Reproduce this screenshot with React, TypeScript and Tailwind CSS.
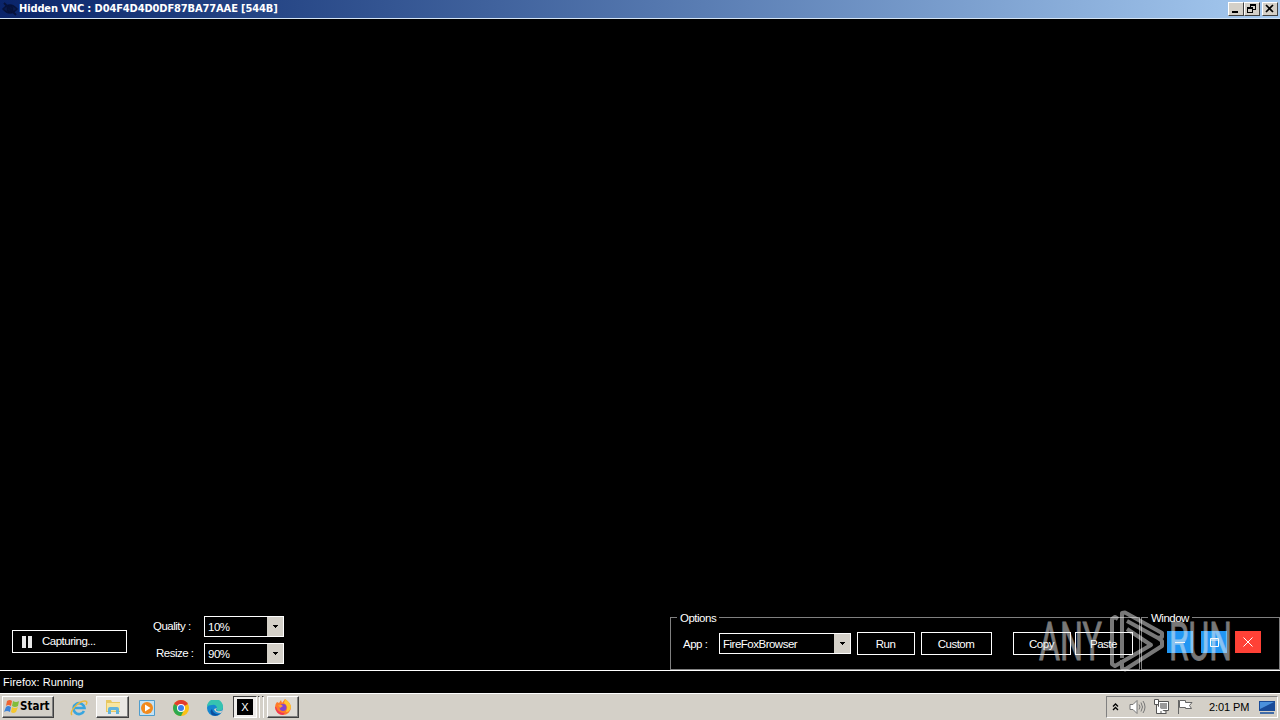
import type { ReactNode } from "react";

const UI_FONT = "font-['Liberation_Sans',sans-serif]";
const LABEL = "text-[11.5px] tracking-[-0.5px] whitespace-nowrap";

const IconEyeOff = () => (
  <svg width="16" height="14" viewBox="0 0 16 14" fill="none" stroke="#06123a">
    <path d="M1 7Q8 -1 15 7Q8 15 1 7Z" fill="#0a1b4c" strokeWidth="1.5" />
    <circle cx="8" cy="7" r="2.5" strokeWidth="1.5" />
    <path d="M2 1L14 13" strokeWidth="2" />
  </svg>
);

const CaptionButton = ({ children }: { children: ReactNode }) => (
  <div className="h-[14px] w-4 bg-[#d4d0c8] border border-t-white border-l-white border-r-[#404040] border-b-[#404040]">
    <svg width="14" height="12" viewBox="0 0 14 12" fill="none" stroke="#000" shapeRendering="crispEdges">
      {children}
    </svg>
  </div>
);

const TitleBar = () => (
  <div className="flex h-[19px] items-start border-b border-[#d4e4f4] bg-gradient-to-r from-[#0a246a] to-[#a6caf0] pl-[2px] pr-[2px]">
    <div className="mt-[2px] w-[17px]">
      <IconEyeOff />
    </div>
    <span className="mt-[2px] flex-1 whitespace-nowrap font-['DejaVu_Sans_Condensed','DejaVu_Sans',sans-serif] text-[11px] leading-[14px] font-bold font-stretch-condensed tracking-[-0.12px] text-white">
      Hidden VNC : D04F4D4D0DF87BA77AAE [544B]
    </span>
    <div className="mt-[2px] flex">
      <CaptionButton>
        <path d="M3 9H9" strokeWidth="2" />
      </CaptionButton>
      <CaptionButton>
        <path d="M5 2H11M5 1.5H11M5.5 1V4M10.5 1V7M8 6.5H11" />
        <path d="M2 5H8M2 4.5H8M2.5 4V10M7.5 4V10M2 9.5H8" />
      </CaptionButton>
      <div className="ml-[2px]">
        <CaptionButton>
          <path d="M3 2L10 9M10 2L3 9" strokeWidth="1.7" shapeRendering="auto" />
        </CaptionButton>
      </div>
    </div>
  </div>
);

interface ComboProps {
  value: string;
  className: string;
}

const Combo = ({ value, className }: ComboProps) => (
  <div className={`flex h-[21px] border border-white bg-black ${className}`}>
    <span className={`flex-1 pl-[3px] leading-[20px] ${LABEL}`}>{value}</span>
    <div className="flex w-4 items-center justify-center bg-[#d4d0c8]">
      <svg width="5" height="3" viewBox="0 0 5 3" shapeRendering="crispEdges">
        <path d="M0 0H5L2.5 3Z" />
      </svg>
    </div>
  </div>
);

const FlatButton = ({ label, className }: { label: string; className: string }) => (
  <div className={`h-[23px] border border-white pr-px text-center leading-[22px] ${LABEL} ${className}`}>
    {label}
  </div>
);

interface GroupProps {
  title: string;
  className: string;
  children: ReactNode;
}

const Group = ({ title, className, children }: GroupProps) => (
  <div className={`relative flex h-[53px] border border-[#808080] ${className}`}>
    <span className={`absolute -top-[7px] left-[6px] bg-black px-[3px] leading-[14px] ${LABEL}`}>
      {title}
    </span>
    {children}
  </div>
);

const Controls = () => (
  <div className="flex h-[61px] pb-px">
    <div className="mt-[21px] ml-3 flex h-[23px] w-[115px] items-center border border-white">
      <div className="ml-[9px] flex gap-[2px]">
        <div className="h-3 w-[4px] bg-[#e8e8e8]" />
        <div className="h-3 w-[4px] bg-[#e8e8e8]" />
      </div>
      <span className={`ml-[10px] ${LABEL}`}>Capturing...</span>
    </div>
    <div className={`mt-[7px] ml-[26px] flex flex-col gap-[6px] ${LABEL}`}>
      <div className="flex">
        <span className="w-[51px] leading-[20px]">Quality :</span>
        <Combo value="10%" className="w-20" />
      </div>
      <div className="flex">
        <span className="w-[51px] pl-[3px] leading-[20px]">Resize :</span>
        <Combo value="90%" className="w-20" />
      </div>
    </div>
    <div className="mt-2 ml-auto flex">
      <Group title="Options" className="w-[470px]">
        <span className={`mt-[15px] ml-[12px] w-[36px] leading-[22px] ${LABEL}`}>App :</span>
        <Combo value="FireFoxBrowser" className="mt-[15px] w-[132px]" />
        <FlatButton label="Run" className="mt-[14px] ml-[6px] w-[58px]" />
        <FlatButton label="Custom" className="mt-[14px] ml-[6px] w-[71px]" />
        <FlatButton label="Copy" className="mt-[14px] ml-[21px] w-[58px]" />
        <FlatButton label="Paste" className="mt-[14px] ml-[4px] w-[58px]" />
      </Group>
      <Group title="Window" className="ml-[1px] w-[139px] pl-[25px]">
        <div className="mt-[13px] flex gap-2">
          <svg width="26" height="22" className="bg-[#2196f3]" stroke="#fff">
            <path d="M8 11.5H18" />
          </svg>
          <svg width="26" height="22" className="bg-[#2196f3]" fill="none" stroke="#fff">
            <path d="M9.5 7.5H17.5V15.5H9.5ZM9 9H18" />
          </svg>
          <svg width="26" height="22" className="bg-[#ff4136]" stroke="#fff">
            <path d="M8.5 6.5L17.5 15.5M17.5 6.5L8.5 15.5" />
          </svg>
        </div>
      </Group>
    </div>
  </div>
);

const Watermark = () => (
  <svg
    className="pointer-events-none absolute top-[608px] left-[1036px] opacity-50"
    width="200"
    height="66"
    viewBox="0 0 200 66"
    fill="#f0f0f0"
  >
    <g fontFamily="Roboto, sans-serif" fontWeight="400" fontSize="53" stroke="#f0f0f0" strokeWidth="0.8">
      <text x="3" y="51.5" textLength="63" lengthAdjust="spacingAndGlyphs">ANY</text>
      <text x="133" y="51.5" textLength="63" lengthAdjust="spacingAndGlyphs">RUN</text>
    </g>
    {/* single path so the crossing strokes keep one shade */}
    <path
      d="M86 50V5L89 4.5L126 25V29L122 30L91 13M82 11L79 9L76 11V56L79 58L115 37L91 21M86 52V60L89 61.5L126 38V33L122 30"
      fill="none"
      stroke="#f0f0f0"
      strokeWidth="4"
      strokeLinejoin="round"
    />
  </svg>
);

const StartLogo = () => (
  <svg width="16" height="16" viewBox="0 0 16 16">
    <path d="M3 2Q6 0 8 2L7 7Q4 5 2 7Z" fill="#ef6430" />
    <path d="M9 2Q12 4 15 2L14 7Q11 9 8 7Z" fill="#82bd3c" />
    <path d="M2 8Q4 6 7 8L6 13Q3 11 0 13Z" fill="#3c83d8" />
    <path d="M8 8Q11 10 14 8L12 13Q9 15 7 13Z" fill="#f5c72e" />
  </svg>
);

const IconIE = () => (
  <svg width="18" height="18" viewBox="0 0 18 18" fill="none">
    <path d="M14 12A5.5 5.5 0 1 1 14.5 9H5" stroke="#38a5df" strokeWidth="2.6" />
    <path d="M2 16C-1 13 8 2 15 2Q18 2 16 6" stroke="#eab93c" strokeWidth="1.5" />
  </svg>
);

const IconFolder = () => (
  <svg width="18" height="18" viewBox="0 0 18 18">
    <path d="M2 2H7L8 4H16V14H2Z" fill="#e8c861" />
    <path d="M3 5H16V13H3Z" fill="#f8e6a0" />
    <path d="M4 16V11Q4 9 6 9H13Q15 9 15 11V16H12V12H7V16Z" fill="#62b4dc" />
  </svg>
);

const IconMedia = () => (
  <svg width="16" height="16" viewBox="0 0 16 16">
    <path d="M.5.5H15.5V15.5H.5Z" fill="#c4e2f5" stroke="#4f9dcd" />
    <circle cx="8" cy="8" r="6" fill="#f28a1d" />
    <path d="M6 4.5L11.5 8L6 11.5Z" fill="#fff" />
  </svg>
);

const IconChrome = () => (
  <svg width="16" height="16" viewBox="0 0 16 16">
    <circle cx="8" cy="8" r="8" fill="#fbc116" />
    <path d="M8 8L1.1 4A8 8 0 0 1 14.9 4Z" fill="#e33b2e" />
    <path d="M8 8L1.1 4A8 8 0 0 0 8 16L11 10Z" fill="#2da94f" />
    <circle cx="8" cy="8" r="4" fill="#fff" />
    <circle cx="8" cy="8" r="3" fill="#3b7ded" />
  </svg>
);

const IconEdge = () => (
  <svg width="16" height="16" viewBox="0 0 16 16">
    <circle cx="8" cy="8" r="8" fill="#1687d0" />
    <path d="M0 7A8 8 0 0 1 16 7Q16 11 11 11Q9 10 10 8Q9 4 5 5Q1 5 0 7Z" fill="#36c3b0" />
    <path d="M5 9Q6 15 13 14A8 8 0 0 1 5 15Q2 11 5 9Z" fill="#0c4f9f" />
    <path d="M10 8Q8 10 10 11Q13 12 16 10L14 13Q8 13 7 9Z" fill="#d4d0c8" />
  </svg>
);

const IconFirefox = () => (
  <svg width="16" height="16" viewBox="0 0 16 16">
    <path d="M2 3L4 4L6 1L7 4L10 0Q15 3 16 8A8 8 0 0 1 0 8Q0 5 2 3Z" fill="#ff7a2a" />
    <path d="M10 0Q15 3 16 8Q15 13 11 13Q14 7 9 4Z" fill="#ffc52e" />
    <path d="M1 8Q3 14 10 14L8 16Q1 15 0 8Z" fill="#f23659" />
    <circle cx="8" cy="8.5" r="3.4" fill="#8145d0" />
    <path d="M3 6Q6 5 8 7L5 9Z" fill="#ff9d2e" />
  </svg>
);

const Raised = "border border-t-white border-l-white border-r-[#404040] border-b-[#404040] shadow-[inset_-1px_-1px_#808080]";

const Tray = () => (
  <div className="mr-[2px] ml-auto flex h-[22px] w-[172px] items-center border border-t-[#808080] border-l-[#808080] border-r-white border-b-white pl-[5px]">
    <svg width="7" height="8" viewBox="0 0 7 8" fill="none" stroke="#000" strokeWidth="1.3">
      <path d="M1 3.5L3.5 1L6 3.5M1 7L3.5 4.5L6 7" />
    </svg>
    <svg className="ml-[10px]" width="17" height="16" viewBox="0 0 17 16" fill="none" stroke="#777">
      <path d="M1 5.5H4L8 1.5V14.5L4 10.5H1Z" fill="#fff" />
      <path d="M10 5.5Q12 8 10 10.5M12 3.5Q15 8 12 12.5M14 2Q18 8 14 14" />
    </svg>
    <svg className="ml-[7px]" width="17" height="16" viewBox="0 0 17 16" stroke="#555" fill="none">
      <path d="M5.5 2.5H15.5V11.5H5.5Z" fill="#fff" />
      <path d="M7 4H14V10H7Z" fill="#999" stroke="none" />
      <path d="M1.5.5V5.5H5.5V.5ZM3.5 6V14.5H13.5M8 14V12M13 14V12" fill="#fff" />
    </svg>
    <svg className="ml-[7px]" width="16" height="16" viewBox="0 0 16 16" fill="#fff" stroke="#666">
      <path d="M1.5 1V15" />
      <path d="M2.5 1.5H8.5V3.5H15L12.5 6.5L14.5 9.5H8.5V8.5H2.5Z" />
    </svg>
    <span className="ml-[16px] w-[50px] whitespace-nowrap text-[11px] tracking-[-0.1px] text-black">2:01 PM</span>
    <svg width="16" height="13" viewBox="0 0 16 13">
      <path d="M0 0H16V10H0Z" fill="#194b98" />
      <path d="M1 1H15L1 8Z" fill="#4b91dc" />
      <path d="M1 11H15V13H1Z" fill="#416ca7" />
    </svg>
  </div>
);

const Taskbar = () => (
  <div className="flex h-[27px] border-t border-white bg-[#d4d0c8] pt-[2px]">
    <div className={`ml-[2px] flex h-[22px] w-[52px] items-center pl-[1px] text-black ${Raised}`}>
      <StartLogo />
      <span className="font-['DejaVu_Sans_Condensed','DejaVu_Sans',sans-serif] text-[11.5px] font-bold font-stretch-condensed">
        Start
      </span>
    </div>
    <div className="ml-[16px] flex w-[18px] items-center">
      <IconIE />
    </div>
    <div className={`ml-[8px] flex h-[22px] w-[33px] items-center justify-center bg-[#eae8e4] ${Raised}`}>
      <IconFolder />
    </div>
    <div className="ml-[10px] flex items-center">
      <IconMedia />
    </div>
    <div className="ml-[18px] flex items-center">
      <IconChrome />
    </div>
    <div className="ml-[18px] flex items-center">
      <IconEdge />
    </div>
    <div className="ml-[10px] flex h-[22px] w-[24px] items-center justify-center border border-t-[#404040] border-l-[#404040] border-r-white border-b-white bg-[#efedea]">
      <span className="h-4 w-4 bg-black text-center text-[11px] leading-4 text-white">X</span>
    </div>
    <div className="flex h-[22px] gap-[2px] pl-px">
      <div className="w-[2px] border-t border-r border-t-[#404040] border-r-white" />
      <div className="w-[2px] border-t border-r border-t-[#404040] border-r-white" />
    </div>
    <div className={`ml-[3px] flex h-[22px] w-[32px] items-center justify-center bg-[#dedbd5] ${Raised}`}>
      <IconFirefox />
    </div>
    <Tray />
  </div>
);

export default function App() {
  return (
    <div className={`relative flex h-[720px] w-[1280px] flex-col overflow-hidden bg-black text-white ${UI_FONT}`}>
      <TitleBar />
      <div className="flex-1" />
      <Controls />
      <div className="h-[23px] border-t border-white pl-[3px] text-[11px] leading-[22px]">Firefox: Running</div>
      <Taskbar />
      <Watermark />
    </div>
  );
}
